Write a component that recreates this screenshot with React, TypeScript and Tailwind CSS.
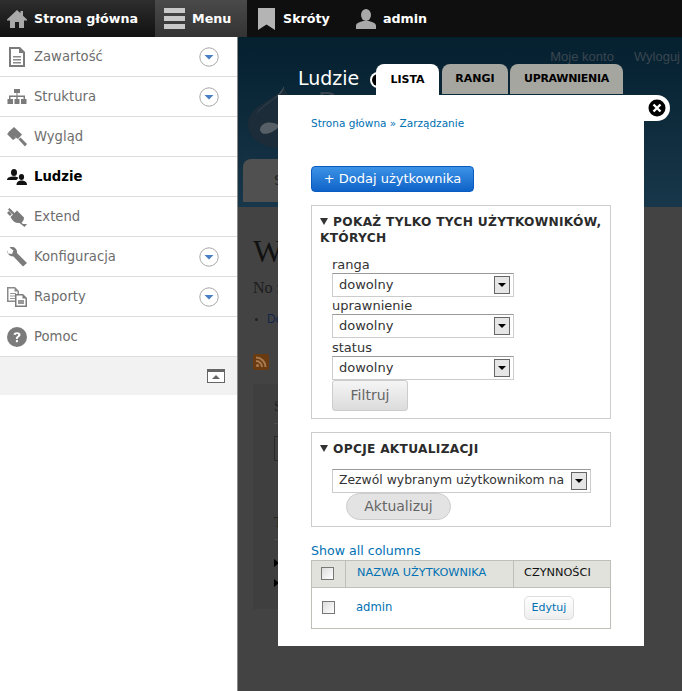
import React from 'react';

const ui = "font-['DejaVu_Sans',sans-serif]";

const IconHome = () => (
  <svg width="20" height="20" viewBox="0 0 20 20" className="text-[#a9a9a9]" fill="currentColor">
    <path d="M10 1 L0 10.5 L0 11.5 L3 11.5 L3 19 L8 19 L8 13 L12 13 L12 19 L17 19 L17 11.5 L20 11.5 L20 10.5 L16 6.7 L16 2 L13.5 2 L13.5 4.3 Z" />
  </svg>
);
const IconMenu = () => (
  <div className="flex w-[21px] flex-col gap-[3px]">
    <div className="h-[5px] bg-[#c9c9c9]" />
    <div className="h-[5px] bg-[#c9c9c9]" />
    <div className="h-[5px] bg-[#c9c9c9]" />
  </div>
);
const IconBookmark = () => (
  <svg width="17" height="22" viewBox="0 0 17 22" fill="#b4b4b4"><path d="M0 0 H17 V22 L8.5 16.5 L0 22 Z" /></svg>
);
const IconUser = () => (
  <svg width="20" height="20" viewBox="0 0 20 20" fill="#a9a9a9">
    <ellipse cx="10" cy="6" rx="5" ry="6" />
    <path d="M0 20 V16.5 C0 14 4 13 7 12 H13 C16 13 20 14 20 16.5 V20 Z" />
  </svg>
);

const icons: Record<string, React.ReactNode> = {
  doc: (
    <svg width="16" height="20" viewBox="0 0 16 20" className="ml-[2px]"><path d="M0 0 H11 L16 5 V20 H0 Z" fill="#7b7b7b" /><path d="M2 2 H10 V6 H14 V18 H2 Z" fill="#fff" /><path d="M4 9 H12 V10.5 H4 Z M4 12 H12 V13.5 H4 Z M4 15 H12 V16.5 H4 Z" fill="#8a8a8a" /></svg>
  ),
  tree: (
    <svg width="20" height="16" viewBox="0 0 20 16" fill="#7b7b7b"><path d="M7 0 H13 V4 H10.5 V6.5 H18 V10 H19.5 V15 H14 V10 H16.5 V8 H10.7 V10 H12.5 V15 H7.5 V10 H9.3 V8 H3.5 V10 H6 V15 H0.5 V10 H2 V6.5 H9.5 V4 H7 Z" /></svg>
  ),
  brush: (
    <svg width="20" height="20" viewBox="0 0 20 20" fill="#7b7b7b"><path d="M7 0 L15 7.5 L11 12 L1 5.5 Z" /><path d="M11.5 12.5 L13.5 10.5 L20 17 L18 19.5 Z" /><path d="M0 7 L3 5 L9 11 L6 13 Z" /></svg>
  ),
  people: (
    <svg width="20" height="16" viewBox="0 0 20 16" fill="#111"><ellipse cx="7" cy="3.5" rx="3" ry="3.5" /><path d="M0 11 C0 8 4 7.5 7 7.5 C9 7.5 10.5 8 11.5 9 C10 10 9.5 11 9.5 11 Z" /><ellipse cx="14.5" cy="8" rx="2.6" ry="3" /><path d="M9.5 16 C9.5 12.5 12 11.5 14.5 11.5 C17 11.5 20 12.5 20 16 Z" /></svg>
  ),
  plug: (
    <svg width="20" height="20" viewBox="0 0 20 20" fill="#7b7b7b"><path d="M2.5 1 L7.5 6 L10 3.5 L17 10.5 C17 13 16 14.5 14.5 15.5 L16 17 L20 17 L17.5 20 L12.5 16 C9 16.5 6 15 3.5 10 L6 7.5 L1 2.5 Z M0 6 L2 4 L5 7 L3 9 Z" /></svg>
  ),
  wrench: (
    <svg width="20" height="20" viewBox="0 0 20 20" fill="#7b7b7b"><path d="M5 0 C3.5 0 2.5 .5 2.5 .5 L6.5 3.5 L5 7 L1 6.5 L0 3 C-.5 6 2 9.5 6.5 9.5 L16 19.5 L20 16 L10 6 C10.5 2.5 8 0 5 0 Z" /></svg>
  ),
  reports: (
    <svg width="20" height="20" viewBox="0 0 20 20"><path d="M0 0 H8 L12 4 V15 H0 Z" fill="#8a8a8a" /><path d="M1.5 1.5 H7.5 V4.5 H10.5 V13.5 H1.5 Z" fill="#fff" /><path d="M3 6 H9 V7 H3 Z M3 8.5 H9 V9.5 H3 Z M3 11 H9 V12 H3 Z" fill="#999" /><path d="M8 7 H16 L20 11 V20 H8 Z" fill="#7b7b7b" /><path d="M9.5 8.5 H15.5 V11.5 H18.5 V18.5 H9.5 Z" fill="#fff" /><path d="M11 13 H17 V17 H11 Z" fill="#999" /></svg>
  ),
  help: (
    <svg width="20" height="20" viewBox="0 0 20 20"><circle cx="10" cy="10" r="10" fill="#7b7b7b" /><path d="M6.5 7.5 C6.5 4.8 13.5 4.3 13.5 7.7 C13.5 10 10.8 9.8 10.8 12 H8.9 C8.9 9 11.2 9.2 11.2 7.8 C11.2 6.5 8.8 6.7 8.7 8 Z" fill="#fff" /><rect x="8.9" y="13" width="2" height="2.2" fill="#fff" /></svg>
  ),
};

const Chevron = () => (
  <svg width="20" height="20" viewBox="0 0 20 20">
    <circle cx="10" cy="10" r="9.2" fill="#fff" stroke="#a6a6a6" strokeWidth="1" />
    <path d="M5.5 8 H14.5 L10 12.5 Z" fill="#4a7fc4" />
  </svg>
);

const menu = [
  { label: 'Zawartość', icon: 'doc', more: true },
  { label: 'Struktura', icon: 'tree', more: true },
  { label: 'Wygląd', icon: 'brush' },
  { label: 'Ludzie', icon: 'people', active: true },
  { label: 'Extend', icon: 'plug' },
  { label: 'Konfiguracja', icon: 'wrench', more: true },
  { label: 'Raporty', icon: 'reports', more: true },
  { label: 'Pomoc', icon: 'help' },
];

const Select = ({ value, width, small }: { value: string; width: string; small?: boolean }) => (
  <div className={`flex h-6 items-center justify-between border border-[#ccc] border-t-[#999] bg-white pl-[6px] pr-[3px] text-[#333] ${small ? 'text-[12.4px]' : 'text-[13px]'} ${width}`}>
    <span className="whitespace-nowrap">{value}</span>
    <span className="flex h-[18px] w-4 shrink-0 items-center justify-center border border-[#666] bg-[#e6e6e6]">
      <span className="h-0 w-0 border-x-[4px] border-t-[4px] border-x-transparent border-t-black" />
    </span>
  </div>
);

const Legend = ({ children }: { children: React.ReactNode }) => (
  <div className="whitespace-nowrap text-[12.2px] font-bold uppercase leading-4 tracking-[0.3px] text-[#2b2b2b]">
    <span className="mr-[5px] inline-block h-0 w-0 translate-y-[-1px] border-x-[4px] border-t-[7px] border-x-transparent border-t-[#333]" />
    {children}
  </div>
);

const Checkbox = () => (
  <span className="block h-[13px] w-[13px] border border-[#777] bg-gradient-to-br from-[#ddd] to-white" />
);

export default function App() {
  return (
    <div className={`flex h-[691px] w-[682px] flex-col overflow-hidden bg-[#404040] ${ui}`}>
      <div className="flex h-[37px] shrink-0 items-center bg-[#0f0f0f] text-[12.7px] font-bold text-white">
        <div className="flex h-full w-[155px] items-center gap-[7px] bg-gradient-to-b from-[#2e2e2e] to-[#111] pl-[7px]">
          <IconHome />
          <span>Strona główna</span>
        </div>
        <div className="flex h-full w-[92px] items-center gap-[7px] bg-gradient-to-b from-[#4a4a4a] to-[#333] pl-[9px]">
          <IconMenu />
          <span>Menu</span>
        </div>
        <div className="flex h-full items-center gap-2 pl-[11px]">
          <IconBookmark />
          <span>Skróty</span>
        </div>
        <div className="flex h-full items-center gap-[7px] pl-[26px]">
          <IconUser />
          <span>admin</span>
        </div>
      </div>

      <div className="flex min-h-0 flex-1">
        <div className="w-[238px] shrink-0 self-stretch border-r border-[#888] bg-white">
          {menu.map((m) => (
            <div key={m.label} className="flex h-10 items-center border-b border-[#ddd] pl-[7px] pr-[18px]">
              <span className="flex w-[27px] shrink-0 items-center">{icons[m.icon]}</span>
              <span className={m.active ? 'flex-1 text-[13.2px] font-bold text-black' : 'flex-1 text-[13.2px] text-[#6d6d6d]'}>{m.label}</span>
              {m.more && <Chevron />}
            </div>
          ))}
          <div className="flex h-[38px] items-center justify-end bg-[#f2f2f2] pr-[12px]">
            <span className="flex h-[14px] w-[18px] items-center justify-center border border-[#666] border-t-[3px] bg-white">
              <span className="h-0 w-0 border-x-[4px] border-b-[4px] border-x-transparent border-b-[#666]" />
            </span>
          </div>
        </div>

        <div className="relative min-w-0 flex-1 bg-[#434343]">
          {/* dimmed page behind the overlay */}
          <div className="h-[170px] bg-gradient-to-b from-[#05202f] to-[#18374a] pl-[5px] pt-[12px]">
            <div className="flex justify-end gap-[20px] pr-[2px] font-['Liberation_Sans',sans-serif] text-[13px] leading-4 text-[#3a4650]">
              <span>Moje konto</span>
              <span>Wyloguj</span>
            </div>
          </div>
          <div className="pl-[15px] pt-[26px] font-['Liberation_Serif',serif] text-[#111]">
            <div className="text-[32px] leading-[36px]">W</div>
            <div className="mt-[7px] text-[16px] leading-6 text-[#1c1c1c]">No f</div>
            <div className="mt-[10px] flex items-center gap-[9px] pl-[2px] font-['Liberation_Sans',sans-serif] text-[12px] text-[#12264a]">
              <span className="h-[3px] w-[3px] rounded-full bg-[#222]" />
              <span>Do</span>
            </div>
            <svg width="16" height="16" viewBox="0 0 16 16" className="mt-[26px]">
              <rect width="16" height="16" rx="2" fill="#6a3a10" />
              <circle cx="4.5" cy="11.5" r="1.6" fill="#a87a50" />
              <path d="M3 7 A6 6 0 0 1 9 13 M3 3.5 A9.5 9.5 0 0 1 12.5 13" fill="none" stroke="#a87a50" strokeWidth="2" />
            </svg>
            <div className="mt-[14px] h-[225px] w-[300px] bg-[#3f3f3f] pl-[21px] pt-[13px] text-[#222]">
              <div className="h-[27px] w-full border-b border-[#4e4e4e] text-[14px] leading-5">S</div>
              <div className="mt-[12px] h-[25px] w-full border border-[#2a2a2a]" />
              <div className="mt-[52px] h-[27px] w-full border-b border-[#4e4e4e] text-[14px] leading-5">T</div>
              <div className="mt-[19px] h-0 w-0 border-y-[4px] border-l-[5px] border-y-transparent border-l-black" />
              <div className="mt-[12px] h-0 w-0 border-y-[4px] border-l-[5px] border-y-transparent border-l-black" />
            </div>
          </div>

          {/* logo and primary tab of the page, under the overlay */}
          <svg width="64" height="62" viewBox="0 0 64 62" className="absolute left-[10px] top-[49px]">
            <path d="M36 0 C36 12 62 20 62 40 C62 54 48 62 32 62 C14 62 0 52 0 38 C0 18 30 14 36 0 Z" fill="#1c2c38" />
            <path d="M36 0 C36 10 18 16 8 28 C14 18 30 14 36 0 Z" fill="#4a5a65" />
            <path d="M12 44 C12 36 24 34 32 40 C26 46 14 52 12 44 Z" fill="#565f66" />
          </svg>
          <div className="absolute left-[80px] top-[51px] font-['Liberation_Sans',sans-serif] text-[28px] leading-none text-[#35444f]">Drupal</div>
          <div className="absolute left-[5px] top-[122px] flex h-[43px] w-[60px] items-center justify-end rounded-t-[8px] bg-[#505050] pr-[20px] text-[14px] text-[#222]">S</div>

          {/* overlay */}
          <div className="absolute left-[40px] top-[58px] w-[366px] bg-white px-[33px] pb-[17px] pt-[21px] text-[#333]">
            <div className="text-[10.5px] text-[#0071b3]">Strona główna » Zarządzanie</div>
            <div className="mt-[34px] flex h-[26px] w-[163px] items-center justify-center rounded-[4px] border border-[#0a5bc0] bg-gradient-to-b from-[#3c93e6] to-[#0d63c8] text-[13px] text-white">
              + Dodaj użytkownika
            </div>

            <div className="mt-[13px] h-[214px] border border-[#ccc] pl-2 pt-[8px]">
              <Legend>
                Pokaż tylko tych użytkowników,
                <br />
                których
              </Legend>
              <div className="mt-[11px] pl-[12px] text-[13px] leading-4">
                <div>ranga</div>
                <Select value="dowolny" width="w-[182px]" />
                <div className="mt-[1px]">uprawnienie</div>
                <Select value="dowolny" width="w-[182px]" />
                <div className="mt-[2px]">status</div>
                <Select value="dowolny" width="w-[182px]" />
                <div className="flex h-[31px] w-[76px] items-center justify-center rounded-[3px] border border-[#ccc] bg-gradient-to-b from-[#f5f5f5] to-[#dcdcdc] text-[14px] text-[#666]">
                  Filtruj
                </div>
              </div>
            </div>

            <div className="mt-[13px] h-[95px] border border-[#ccc] pl-2 pt-[8px]">
              <Legend>Opcje aktualizacji</Legend>
              <div className="mt-[12px] pl-[12px]">
                <Select value="Zezwól wybranym użytkownikom na" width="w-[259px]" small />
                <div className="ml-[14px] flex h-[27px] w-[105px] items-center justify-center rounded-full border border-[#ccc] bg-[#e3e3e3] text-[14px] text-[#666]">
                  Aktualizuj
                </div>
              </div>
            </div>

            <div className="mt-[15px] text-[12.6px] leading-[18px] text-[#0071b3]">Show all columns</div>
            <div className="border border-[#bebfb9]">
              <div className="flex h-[27px] border-b border-[#bebfb9] bg-[#e1e2dc] text-[11.3px]">
                <div className="flex w-[34px] items-center justify-center border-r border-[#bebfb9] pr-[2px]"><Checkbox /></div>
                <div className="flex w-[168px] items-center border-r border-[#bebfb9] pl-[11px] text-[#0071b3]">NAZWA UŻYTKOWNIKA</div>
                <div className="flex flex-1 items-center pl-[10px] text-[#111]">CZYNNOŚCI</div>
              </div>
              <div className="flex h-[40px] items-center text-[11.6px]">
                <div className="flex w-[34px] items-center justify-center pr-[2px]"><Checkbox /></div>
                <div className="w-[168px] pl-[10px] text-[#0071b3]">admin</div>
                <div className="pl-[10px]">
                  <div className="flex h-6 w-[50px] items-center justify-center rounded-[5px] border border-[#ddd] bg-gradient-to-b from-white to-[#eee] text-[11px] text-[#0071b3]">Edytuj</div>
                </div>
              </div>
            </div>
          </div>

          {/* title and tabs above overlay */}
          <div className="absolute left-[60px] top-[31px] text-[19px] leading-5 text-white">Ludzie</div>
          <div className="absolute left-[132px] top-[35px] flex h-4 w-4 items-center justify-center rounded-full bg-white">
            <span className="h-3 w-3 rounded-full bg-black" />
          </div>
          <div className="absolute left-[138px] top-[27px] flex text-[11px] font-bold">
            <div className="flex h-[31px] w-[63px] items-center justify-center rounded-t-[8px] bg-white pt-[1px] text-black">LISTA</div>
            <div className="ml-[3px] flex h-[30px] w-[66px] items-center justify-center rounded-t-[8px] bg-[#a6a6a0] pt-[1px] text-black">RANGI</div>
            <div className="ml-[2px] flex h-[30px] w-[113px] items-center justify-center rounded-t-[8px] bg-[#a6a6a0] pt-[1px] tracking-[-0.3px] text-black">UPRAWNIENIA</div>
          </div>

          {/* close */}
          <div className="absolute left-[405px] top-[58px] flex h-[26px] w-[27px] items-center justify-center rounded-r-full bg-white">
            <svg width="18" height="18" viewBox="0 0 18 18">
              <circle cx="9" cy="9" r="8.5" fill="#000" />
              <path d="M5.5 5.5 L12.5 12.5 M12.5 5.5 L5.5 12.5" stroke="#fff" strokeWidth="2.4" />
            </svg>
          </div>
        </div>
      </div>
    </div>
  );
}
